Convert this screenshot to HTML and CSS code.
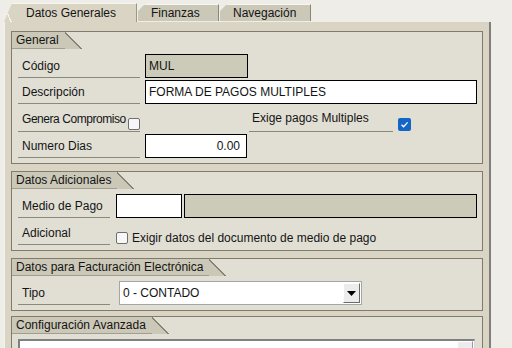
FILE: index.html
```html
<!DOCTYPE html>
<html lang="es">
<head>
<meta charset="utf-8">
<link rel="stylesheet" href="styles.css">
</head>
<body>
<div class="tabs">
  <div class="tab active">Datos Generales</div>
  <div class="tab fin">Finanzas</div>
  <div class="tab nav">Navegación</div>
</div>
<div class="panel">
  <section class="group g1">
    <div class="ghead"><span class="gtitle">General</span></div>
    <div class="gbody">
      <div class="row">
        <div class="lbl">Código</div>
        <div class="field grey code">MUL</div>
      </div>
      <div class="row">
        <div class="lbl">Descripción</div>
        <div class="field grow">FORMA DE PAGOS MULTIPLES</div>
      </div>
      <div class="row tall">
        <div class="lbl split"><span class="tight">Genera Compromiso</span><span class="cb"></span></div>
        <div class="lbl exige">Exige pagos Multiples</div>
        <span class="cb checked"><svg viewBox="0 0 13 13" width="13" height="13"><path d="M3.5 6.8 L5.6 8.8 L9.6 4.4" fill="none" stroke="#fff" stroke-width="1.3"/></svg></span>
      </div>
      <div class="row">
        <div class="lbl">Numero Dias</div>
        <div class="field num">0.00</div>
      </div>
    </div>
  </section>

  <section class="group g2">
    <div class="ghead"><span class="gtitle">Datos Adicionales</span></div>
    <div class="gbody">
      <div class="row">
        <div class="lbl narrow">Medio de Pago</div>
        <div class="field medio"></div>
        <div class="field grey grow medio2"></div>
      </div>
      <div class="row">
        <div class="lbl narrow">Adicional</div>
        <span class="cb adic"></span>
        <span class="cbtext">Exigir datos del documento de medio de pago</span>
      </div>
    </div>
  </section>

  <section class="group g3">
    <div class="ghead"><span class="gtitle">Datos para Facturación Electrónica</span></div>
    <div class="gbody">
      <div class="row">
        <div class="lbl narrow">Tipo</div>
        <div class="select">
          <span class="selval">0 - CONTADO</span>
          <span class="selbtn"><svg viewBox="0 0 9 5" width="9" height="5"><path d="M0 0 H9 L4.5 5 Z" fill="#000"/></svg></span>
        </div>
      </div>
    </div>
  </section>

  <section class="group g4">
    <div class="ghead"><span class="gtitle">Configuración Avanzada</span></div>
    <div class="gbody">
      <div class="listbox"><span class="scrollbtn"></span></div>
    </div>
  </section>
</div>
</body>
</html>
```
FILE: styles.css
```css
* { box-sizing: border-box; }
html, body { margin: 0; padding: 0; }
body {
  width: 512px;
  height: 348px;
  overflow: hidden;
  background: #efede7;
  font-family: "Liberation Sans", Arial, sans-serif;
  font-size: 12px;
  color: #141414;
}

/* Tabs */
.tabs {
  display: flex;
  align-items: flex-end;
  height: 22px;
  padding-left: 4px;
}
.tab {
  display: flex;
  align-items: center;
  height: 17px;
  background: #cbc8b8;
  border-top: 1px solid #f7f5ef;
  border-right: 1px solid #8a8778;
  padding-left: 13px;
  clip-path: polygon(7px 0, 100% 0, 100% 100%, 0 100%, 0 7px);
  margin-bottom: 1px;
}
.tab.active {
  width: 133px;
  height: 19px;
  margin-bottom: 0;
  background: linear-gradient(to top right, transparent 0, transparent calc(50% - 1px), #f7f5ef calc(50% - 1px), #f7f5ef calc(50% + 0.2px), transparent calc(50% + 0.2px)) left top / 8px 19px no-repeat, #d9d4c4;
  padding-left: 22px;
  border-right: 1px solid #9a9688;
  clip-path: polygon(8px 0, 100% 0, 100% 100%, 0 100%);
}
.tab.fin { width: 81px; margin-left: 1px; }
.tab.nav { width: 91px; margin-left: 1px; }

/* Panel */
.panel {
  margin-left: 4px;
  width: 487px;
  height: 326px;
  background: #d9d4c4;
  border-left: 1px solid #f4f2ec;
  border-right: 2px solid #7f7f7f;
  padding: 9px 6px 0 6px;
  display: flex;
  flex-direction: column;
  gap: 7px;
}

.group {
  border: 1px solid #7f7c6e;
  background: #e1dfd4;
  flex: none;
}
.g4 { margin-top: -2px; }
.ghead {
  display: flex;
  height: 17px;
}
.gtitle {
  position: relative;
  background: #cbc8b8;
  padding: 0 6px 0 4px;
  line-height: 16px;
  border-bottom: 1px solid #a19d90;
  white-space: nowrap;
}
.gtitle::after {
  content: "";
  position: absolute;
  left: 100%;
  top: 0;
  width: 17px;
  height: 17px;
  background: linear-gradient(to top right, #cbc8b8 calc(50% - 0.8px), #858274 calc(50% - 0.8px), #858274 calc(50% + 0.6px), transparent calc(50% + 0.6px));
}

.gbody {
  display: flex;
  flex-direction: column;
  gap: 2px;
  padding: 5px 5px 5px 6px;
}
.g2 .gbody { gap: 3px; }

.row {
  display: flex;
  height: 24px;
  align-items: stretch;
}
.row.tall { height: 26px; }

.lbl {
  width: 122px;
  flex: none;
  display: flex;
  align-items: center;
  padding-left: 4px;
  border-bottom: 1px solid #8b887c;
  white-space: nowrap;
}
.lbl.narrow { width: 92px; }
.lbl.split { justify-content: space-between; }
.lbl.split .cb { align-self: flex-end; margin-bottom: 1px; }
.tight { letter-spacing: -0.45px; }
.lbl.exige {
  width: 144px;
  margin-left: 109px;
  padding-left: 3px;
  padding-bottom: 2px;
}

.field {
  flex: none;
  margin-left: 5px;
  border: 1px solid #000;
  background: #fff;
  padding: 0 3px;
  display: flex;
  align-items: center;
  white-space: nowrap;
}
.field.grey { background: #cccbba; }
.field.grow { flex: 1; }
.field.code { width: 103px; }
.field.num { width: 102px; justify-content: flex-end; padding-right: 6px; }
.field.medio { width: 66px; margin-left: 6px; }
.field.medio2 { margin-left: 2px; }

.cb {
  display: inline-block;
  width: 12px;
  height: 12px;
  border: 1px solid #6f6f6f;
  border-radius: 2px;
  background: #f7f7f7;
  flex: none;
}
.cb.checked {
  width: 13px;
  height: 13px;
  border: none;
  background: #1466c6;
  margin-left: 5px;
  align-self: flex-end;
  margin-bottom: 1px;
}
.cb.checked svg { display: block; }
.cb.adic { align-self: flex-end; margin: 0 0 1px 6px; }
.cbtext {
  margin-left: 4px;
  align-self: flex-end;
  line-height: 14px;
  white-space: nowrap;
}

.select {
  margin-left: 9px;
  width: 243px;
  display: flex;
  align-items: center;
  background: #fff;
  border: 1px solid #a5a5a5;
  padding: 1px 1px 1px 0;
}
.selval { flex: 1; padding-left: 3px; }
.selbtn {
  width: 17px;
  height: 20px;
  background: #ececec;
  border-top: 1px solid #ffffff;
  border-left: 1px solid #ffffff;
  border-right: 1px solid #6a6a6a;
  border-bottom: 1px solid #6a6a6a;
  display: flex;
  align-items: center;
  justify-content: center;
}
.selbtn svg { display: block; }

.listbox {
  height: 20px;
  background: #fff;
  border-top: 2px solid #808080;
  border-left: 2px solid #808080;
  border-right: 1px solid #d8d8d8;
  margin-right: 2px;
  display: flex;
  justify-content: flex-end;
}
.scrollbtn {
  width: 16px;
  height: 16px;
  background: #ececec;
  border-top: 1px solid #fff;
  border-left: 1px solid #fff;
  border-right: 1px solid #9a9a9a;
  margin-right: 1px;
}
```
